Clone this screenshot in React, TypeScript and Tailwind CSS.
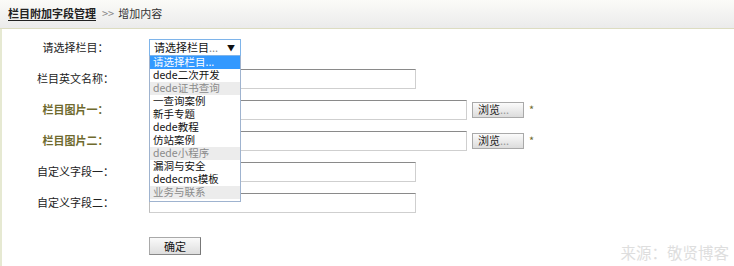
import React from "react";

const font = "font-['SimSun','Noto_Sans_CJK_SC',sans-serif]";

type Opt = { label: string; group?: boolean; active?: boolean };

const options: Opt[] = [
  { label: "请选择栏目...", active: true },
  { label: "dede二次开发" },
  { label: "dede证书查询", group: true },
  { label: "一查询案例" },
  { label: "新手专题" },
  { label: "dede教程" },
  { label: "仿站案例" },
  { label: "dede小程序", group: true },
  { label: "漏洞与安全" },
  { label: "dedecms模板" },
  { label: "业务与联系", group: true },
];

const Label = ({ text, olive }: { text: string; olive?: boolean }) => (
  <div
    className={
      "w-[147px] shrink-0 text-center " +
      (olive ? "font-bold text-[#6f6a2e]" : "text-[#222]")
    }
  >
    {text}
  </div>
);

const TextBox = ({ wide }: { wide?: boolean }) => (
  <div
    className={
      "h-[20px] border border-[#cfcfcf] border-t-[#8a8a8a] border-l-[#bdbdbd] bg-white " +
      (wide ? "w-[318px]" : "w-[267px]")
    }
  />
);

const Browse = () => (
  <div className="ml-[5px] flex h-[16px] w-[52px] items-center border border-[#a9a9a9] bg-gradient-to-b from-[#fbfbfb] to-[#dcdcdc] pl-[5px] text-[#222]">
    浏览<span className="text-[#999]">...</span>
  </div>
);

const App: React.FC = () => {
  return (
    <div className={`relative h-[266px] w-[734px] overflow-hidden bg-white text-[11px] leading-none ${font}`}>
      <div className="flex h-[29px] items-center border-b border-[#dcdcc0] bg-gradient-to-b from-[#fbfbf8] to-[#ebebeb] pl-[8px] pb-[2px]">
        <span className="font-bold text-[#222] underline underline-offset-2">栏目附加字段管理</span>
        <span className="ml-[6px] text-[#888]">&gt;&gt;</span>
        <span className="ml-[4px] text-[#333]">增加内容</span>
      </div>

      <div className="h-[237px] border-l-2 border-[#e6e9d2]">
        <div className="pt-[3px]">
          <div className="flex h-[31px] items-center">
            <Label text="请选择栏目：" />
            <div className="relative">
              <div className="flex h-[17px] w-[92px] items-center justify-between border border-[#7eb4ea] bg-white pl-[4px] pr-[5px] text-[#111]">
                <span>
                  请选择栏目<span className="text-[#888]">...</span>
                </span>
                <span className="text-[8px]">▼</span>
              </div>
              <div className="absolute left-0 top-[17px] z-10 flex w-[92px] flex-col border border-t-0 border-[#9fb3cf] bg-white pb-[2px]">
                {options.map((o) => (
                  <div
                    key={o.label}
                    className={
                      "flex h-[13px] items-center whitespace-nowrap pl-[3px] text-[10.5px] " +
                      (o.active
                        ? "bg-[#3399ff] text-white"
                        : o.group
                        ? "bg-[#ececec] text-[#8a8a8a]"
                        : "text-[#111]")
                    }
                  >
                    {o.label}
                  </div>
                ))}
              </div>
            </div>
          </div>

          <div className="flex h-[31px] items-center">
            <Label text="栏目英文名称：" />
            <TextBox />
          </div>

          <div className="flex h-[31px] items-center">
            <Label text="栏目图片一：" olive />
            <TextBox wide />
            <Browse />
            <span className="ml-[5px] text-[#6f6a2e]">*</span>
          </div>

          <div className="flex h-[31px] items-center">
            <Label text="栏目图片二：" olive />
            <TextBox wide />
            <Browse />
            <span className="ml-[5px] text-[#6f6a2e]">*</span>
          </div>

          <div className="flex h-[31px] items-center">
            <Label text="自定义字段一：" />
            <TextBox />
          </div>

          <div className="flex h-[31px] items-center">
            <Label text="自定义字段二：" />
            <TextBox />
          </div>

          <div className="mt-[19px] flex pl-[147px]">
            <div className="flex h-[18px] w-[52px] items-center justify-center border border-[#a9a9a9] border-r-[#777] border-b-[#888] bg-gradient-to-b from-[#fafafa] to-[#dedede] text-[#111]">
              确定
            </div>
          </div>
        </div>
      </div>

      <div className="absolute bottom-[6px] right-[5px] text-[15.5px] text-[#dedede]">
        来源：敬贤博客
      </div>
    </div>
  );
};

export default App;
